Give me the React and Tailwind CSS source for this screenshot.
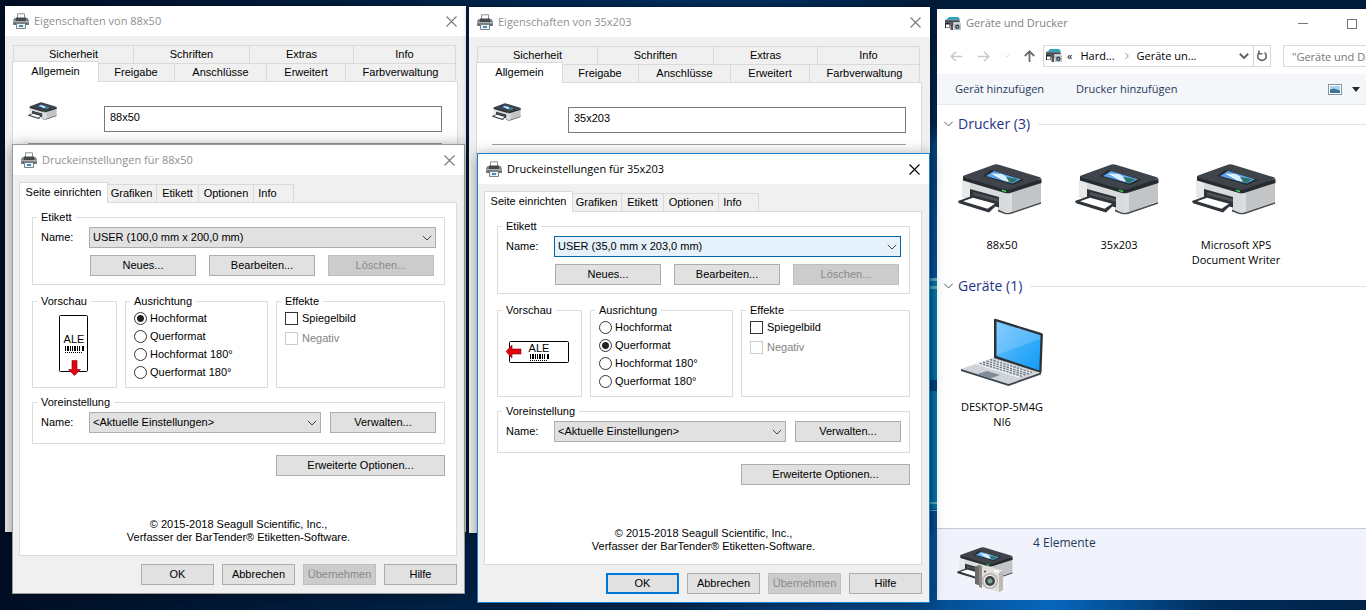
import { useState } from 'react';

const propertyTabsBack = [
  { label: 'Sicherheit', width: 'w-[120px]' },
  { label: 'Schriften', width: 'w-[116px]' },
  { label: 'Extras', width: 'w-[104px]' },
  { label: 'Info', width: 'flex-1' },
];

const propertyTabsFront = [
  { label: 'Freigabe', width: 'w-[77px]' },
  { label: 'Anschlüsse', width: 'w-[92px]' },
  { label: 'Erweitert', width: 'w-[79px]' },
  { label: 'Farbverwaltung', width: 'flex-1' },
];

const settingsTabs = [
  { label: 'Grafiken', width: 'w-[50px]' },
  { label: 'Etikett', width: 'w-[42px]' },
  { label: 'Optionen', width: 'w-[55px]' },
  { label: 'Info', width: 'w-[40px] pr-3' },
];

const orientations = ['Hochformat', 'Querformat', 'Hochformat 180°', 'Querformat 180°'];

const printers = ['88x50', '35x203', 'Microsoft XPS Document Writer'];

/* ---------- Icons ---------- */

const TitlePrinterIcon = () => (
  <svg className="size-4 shrink-0" viewBox="0 0 16 16" aria-hidden="true">
    <path d="M4.500 6V.8h7V6" fill="#fff" stroke="#8d9296" />
    <path d="M1.500 5h13l1.500 2.500V12H0V7.500z" fill="#7d8286" />
    <path d="M3 4.500h10V8H3z" fill="#44494d" />
    <path d="M0 8h16v1H0z" fill="#a9aeb1" />
    <path d="M1.500 10h13v1.500h-13z" fill="#55595d" />
    <path d="M3.500 10.500h9v5h-9z" fill="#eef3f6" stroke="#7b8185" />
    <path d="M6 12h4v2H6z" fill="#3d8fb8" />
    <path d="M13.500 9h1v1h-1z" fill="#7be07b" />
  </svg>
);

const DevicesIcon = () => (
  <svg className="size-4 shrink-0" viewBox="0 0 16 16" aria-hidden="true">
    <path d="M0 4 4 2h10l1 3v5H4L0 9z" fill="#87939b" />
    <path d="M4 1h9l2 2.500H2z" fill="#27a5bf" />
    <path d="M0 4.500h14V6H0z" fill="#3c484f" />
    <path d="M0 6.500h5V12H0z" fill="#252c31" />
    <path d="M1 8.500h3.500v3H1z" fill="#fff" />
    <path d="M5.500 6H8v8H5.500z" fill="#5b4f50" />
    <path d="M8.500 6.500H16V14H8.500z" fill="#b9c2c8" />
    <path d="M8.500 6.500H16v1H8.500z" fill="#e4eaed" />
    <circle cx="12.300" cy="10.800" r="2.200" fill="#39424a" />
    <circle cx="12.300" cy="10.800" r=".9" fill="#a6c7d8" />
  </svg>
);

const PrinterShape = () => (
  <>
    <path d="M4 15 49 27v21.500L40 46V34L12 26v9l-8-2z" fill="#d9dadb" />
    <path d="M4 15 12 17.500V34l-8-2z" fill="#e8e9e9" />
    <path d="M49 27 83 17v20.500L52 48.500h-3z" fill="#c3c4c6" />
    <path d="M49 27l5-1.500v22.300l-2 .7h-3z" fill="#dcddde" />
    <path d="M40 45.500 47 48.500q3 1 6-.2L83 38v1.800L53 50q-4 .8-7-.2l-6-2.300z" fill="#4a4f53" />
    <path d="M12 25 41 33v10.500L12 35z" fill="#2d3237" />
    <path d="M15 28 41 35v3L15 31z" fill="#4b5157" />
    <path d="M0 37 14 32l27 7-10 9.500L1 39.300z" fill="#2f353a" />
    <path d="M5 37.200 15 33.800l22 6-7.500 5z" fill="#fff" />
    <path d="M5 12 5 16.500 47 29q3 .8 6-.3L83.500 19v-4L50 22z" fill="#262b2f" />
    <path d="M35 1q3-1.200 6-.2L82 13.300q2 1 0 2L53 25q-4 1.200-7 .3L6 13.500q-2-1 0-2z" fill="#3e444a" />
    <path d="M33 6 66 15.800 55 21 25 12z" fill="#23282c" />
    <path d="M36 7 63 15.300 54.500 19.500 28 12z" fill="#5aa6ef" />
    <path d="M33 9.500 38 10 50 15l-4 1.800z" fill="#fff" />
    <path d="M36 9.800 44 10l9 5.500-4 2.200z" fill="#d8ecff" />
    <path d="M48 13 60 15l-5.500 4-3-1z" fill="#2e7361" />
    <path d="M44 25.500l4 1.200v1.600l-4-1.200z" fill="#3ddc55" />
  </>
);

const PrinterIcon = ({ className }) => (
  <svg className={className} viewBox="0 0 84 51" aria-hidden="true">
    <PrinterShape />
  </svg>
);

const LaptopIcon = () => (
  <svg className="h-[69px] w-[84px]" viewBox="0 0 84 69" aria-hidden="true">
    <defs>
      <linearGradient id="laptop-screen" x1="0" y1="0" x2="1" y2="1">
        <stop offset="0" stopColor="#6cc3ff" />
        <stop offset="1" stopColor="#109bf7" />
      </linearGradient>
    </defs>
    <path d="M1 51 34 39.500 81 54.500 48.500 66z" fill="#cfd4da" />
    <path d="M1 51 48.500 66 81 54.500v2L48.500 68 1 53z" fill="#3d464e" />
    <path d="M30 40.500 73 54 58 59.500 15 46z" fill="#eef1f4" />
    <path
      d="M30 41.500 72 54.500M26.500 42.800 69 56M23 44 65.500 57M19.500 45.200 62 58.300"
      stroke="#737d86"
      strokeWidth="1.400"
      strokeDasharray="2.500 1"
    />
    <path d="M27 53 40 57 30 60.500 17.500 56z" fill="#7e8b98" />
    <path d="M34 2q0-1.500 1.500-1.200L81.500 15q1.500.5 1.400 2L81.500 55 34 40z" fill="#2b3238" />
    <path d="M36.500 3.500 80.500 17.300 79.300 52.500 36.500 38z" fill="url(#laptop-screen)" />
    <path d="M36.500 3.500 80.500 17.300 80.300 21 36.500 37z" fill="#fff" opacity=".16" />
  </svg>
);

const PrinterCameraIcon = () => (
  <svg className="h-[46px] w-14" viewBox="0 0 56 46" aria-hidden="true">
    <g transform="scale(.667)">
      <PrinterShape />
    </g>
    <path d="M18 20 23 17.500v21L18 37z" fill="#6c6a69" />
    <path d="M22 18 25 19v22l-3-1z" fill="#8f8c8a" />
    <path d="M25 21 30 19l16 4.500V43l-4 2-17-5z" fill="#e3e0dc" />
    <path d="M42 26 46 23.500V43l-4 2z" fill="#bdb9b4" />
    <circle cx="33" cy="34" r="8" fill="#b5b3b0" />
    <circle cx="33" cy="34" r="6.500" fill="#eceae7" />
    <circle cx="33" cy="34" r="5" fill="#3c4145" />
    <circle cx="33" cy="34" r="2.500" fill="#7aa08f" />
    <path d="M37 22.500 42 24v2l-5-1.500z" fill="#fff" />
    <circle cx="28" cy="24.500" r="1" fill="#444" />
  </svg>
);

const CloseIcon = ({ color }) => (
  <svg className="size-[11px]" viewBox="0 0 11 11" fill="none" stroke={color} strokeWidth="1.100" aria-hidden="true">
    <path d="M.5.5l10 10M10.500.5l-10 10" />
  </svg>
);

const Chevron = ({ className }) => (
  <svg className={className} viewBox="0 0 10 6" fill="none" stroke="currentColor" aria-hidden="true">
    <path d="M.8.800 5 5 9.200.800" />
  </svg>
);

const Barcode = ({ x, y }) => (
  <g fill="#000">
    {[0, 2, 5, 7, 9, 12, 14, 17].map((bar, i) => (
      <rect key={bar} x={x + bar} y={y} width={i % 3 === 1 ? 2 : 1} height="5" />
    ))}
    <path d={`M${x} ${y + 6.5}h18`} stroke="#000" strokeDasharray="1 1" />
  </g>
);

const LabelPreview = ({ landscape }) =>
  landscape ? (
    <svg className="mt-6 ml-2 h-6 w-16" viewBox="0 0 64 24" aria-hidden="true">
      <rect x="3.500" y="1.500" width="59" height="21" rx="1" fill="#fff" stroke="#000" />
      <text x="33" y="12" textAnchor="middle" fontSize="11">ALE</text>
      <Barcode x={24} y={14} />
      <path d="M0 11.500 6 5v4h9v5H6v4z" fill="#e3000f" stroke="#8a0008" strokeWidth=".6" />
    </svg>
  ) : (
    <svg className="mt-2 ml-[26px] h-[62px] w-[30px]" viewBox="0 0 30 62" aria-hidden="true">
      <rect x=".5" y=".5" width="28" height="56" rx="1" fill="#fff" stroke="#000" />
      <text x="15" y="28" textAnchor="middle" fontSize="11">ALE</text>
      <Barcode x={6} y={31} />
      <path d="M15.500 60.500 9.500 54.500h3.500v-9h5v9h3.500z" fill="#e3000f" stroke="#8a0008" strokeWidth=".6" />
    </svg>
  );

const Wallpaper = () => (
  <svg className="absolute inset-0 size-full" viewBox="0 0 1366 610" preserveAspectRatio="none" aria-hidden="true">
    <defs>
      <linearGradient id="wall-sky" x1="0" y1="0" x2="0" y2="1">
        <stop offset="0" stopColor="#011a38" />
        <stop offset=".2" stopColor="#012347" />
        <stop offset=".24" stopColor="#024279" />
        <stop offset=".45" stopColor="#07549f" />
        <stop offset="1" stopColor="#044c90" />
      </linearGradient>
      <linearGradient id="wall-left" x1="0" y1="0" x2="1" y2="0">
        <stop offset="0" stopColor="#010f26" />
        <stop offset=".34" stopColor="#012349" />
        <stop offset=".5" stopColor="#012c59" />
        <stop offset=".68" stopColor="#034a8b" stopOpacity="0" />
      </linearGradient>
      <linearGradient id="wall-floor" x1="0" y1="0" x2="1" y2="0">
        <stop offset="0" stopColor="#054c90" />
        <stop offset=".28" stopColor="#0767bd" />
        <stop offset=".65" stopColor="#012d5a" />
        <stop offset="1" stopColor="#012347" />
      </linearGradient>
    </defs>
    <path d="M0 0h1366v610H0z" fill="url(#wall-sky)" />
    <path d="M0 0h1366v610H0z" fill="url(#wall-left)" />
    <path d="M910 278h456v102H910zM910 391h456v118H910z" fill="#0379ad" />
    <path d="M910 380h456v11H910z" fill="#034383" />
    <path d="M910 278h456v3H910zM910 286h456v3H910zM910 502h456v2H910zM910 510h456v1H910z" fill="#5fb4c8" />
    <path d="M930 598h436v12H930z" fill="url(#wall-floor)" />
  </svg>
);

/* ---------- Shared controls ---------- */

const TitleBar = ({ title, active }) => (
  <header className="flex h-[30px] shrink-0 items-center gap-[5px] bg-white pr-[9px] pl-2 font-['Open_Sans',sans-serif]">
    <TitlePrinterIcon />
    <h2 className={active ? 'flex-1 text-[11px] text-black' : 'flex-1 text-[11px] text-[#8f8f8f]'}>{title}</h2>
    <button type="button" aria-label="Schließen">
      <CloseIcon color={active ? '#000' : '#7a7a7a'} />
    </button>
  </header>
);

const Tab = ({ label, width, selected }) => (
  <button
    type="button"
    role="tab"
    aria-selected={!!selected}
    className={
      selected
        ? `relative -mr-px -mb-px h-[21px] border border-b-0 border-[#d9d9d9] bg-white pb-0.5 ${width}`
        : `h-[18px] border border-b-0 border-l-0 border-[#d9d9d9] bg-[#f0f0f0] ${width}`
    }
  >
    {label}
  </button>
);

const PushButton = ({ children, width, primary, disabled }) => {
  let tone = 'border border-[#adadad] bg-[#e1e1e1] text-black';
  if (primary) tone = 'border-2 border-[#0078d7] bg-[#e1e1e1] text-black';
  if (disabled) tone = 'border border-[#bfbfbf] bg-[#cccccc] text-[#8a8a8a]';

  return (
    <button type="button" disabled={disabled} className={`h-[21px] shrink-0 ${tone} ${width}`}>
      {children}
    </button>
  );
};

const Group = ({ title, className, children }) => (
  <fieldset className={`min-w-0 border border-[#dcdcdc] px-2 ${className}`}>
    <legend className="-ml-1 px-1 leading-3">{title}</legend>
    {children}
  </fieldset>
);

const ComboBox = ({ id, value, focused }) => (
  <div className="relative min-w-0 flex-1">
    <select
      id={id}
      defaultValue={value}
      className={
        focused
          ? 'block h-[21px] w-full appearance-none border border-[#0067a8] bg-[#e5f1fb] pr-6 pl-[3px]'
          : 'block h-[21px] w-full appearance-none border border-[#adadad] bg-[#e1e1e1] pr-6 pl-[3px]'
      }
    >
      <option>{value}</option>
    </select>
    <Chevron className="pointer-events-none absolute top-2 right-1 h-[6px] w-[10px] text-[#444]" />
  </div>
);

/* ---------- Windows ---------- */

const PropertiesWindow = ({ name, place }) => (
  <section
    className={`absolute h-[526px] w-[461px] bg-[#f0f0f0] font-['Liberation_Sans',sans-serif] text-[11px] text-black shadow-[0_0_6px_rgba(0,0,0,0.5)] ${place}`}
  >
    <TitleBar title={`Eigenschaften von ${name}`} />
    <div className="flex h-[calc(100%-30px)] flex-col pt-[9px] pr-2 pl-[7px]">
      <div role="tablist" className="mr-0.5 ml-px flex h-[18px] items-end border-l border-[#d9d9d9]">
        {propertyTabsBack.map((tab) => (
          <Tab key={tab.label} {...tab} />
        ))}
      </div>
      <div role="tablist" className="mr-0.5 flex h-[18px] items-end">
        <Tab label="Allgemein" width="w-[87px]" selected />
        {propertyTabsFront.map((tab) => (
          <Tab key={tab.label} {...tab} />
        ))}
      </div>
      <div className="flex-1 border border-[#dcdcdc] bg-white px-[15px] pt-6">
        <div className="flex h-[38px] items-start justify-between border-b border-[#a0a0a0]">
          <PrinterIcon className="-mt-1 h-[18px] w-[29px]" />
          <input
            type="text"
            aria-label="Druckername"
            defaultValue={name}
            className="h-[26px] w-[338px] border border-[#7a7a7a] bg-white pb-1 pl-[5px]"
          />
        </div>
      </div>
    </div>
  </section>
);

const SettingsDialog = ({ name, format, initialOrientation, active, place }) => {
  const [orientation, setOrientation] = useState(initialOrientation);

  return (
    <section
      className={`absolute w-[453px] border bg-[#f0f0f0] font-['Liberation_Sans',sans-serif] text-[11px] text-black shadow-[0_2px_14px_rgba(0,0,0,0.4)] ${
        active ? 'border-[#1883d7]' : 'border-[#9a9a9a]'
      } ${place}`}
    >
      <TitleBar title={`Druckeinstellungen für ${name}`} active={active} />
      <div className="px-[6px] pt-[7px] pb-2">
        <div role="tablist" className="flex h-5 items-end">
          <Tab label="Seite einrichten" width="w-[89px]" selected />
          {settingsTabs.map((tab) => (
            <Tab key={tab.label} {...tab} />
          ))}
        </div>

        <div className="mr-px border border-[#dcdcdc] bg-white pt-2 pr-[11px] pb-[11px] pl-3">
          <Group title="Etikett" className="pb-2">
            <div className="mt-1 flex">
              <label htmlFor={`format-${name}`} className="w-12 leading-5">Name:</label>
              <ComboBox id={`format-${name}`} value={format} focused={active} />
            </div>
            <div className="mt-[7px] ml-[49px] flex gap-[13px]">
              <PushButton width="w-[106px]">Neues...</PushButton>
              <PushButton width="w-[106px]">Bearbeiten...</PushButton>
              <PushButton width="w-[106px]" disabled>Löschen...</PushButton>
            </div>
          </Group>

          <div className="mt-[10px] flex gap-2">
            <Group title="Vorschau" className="w-[85px]">
              <div className="-mx-2">
                <LabelPreview landscape={orientation.startsWith('Quer')} />
              </div>
            </Group>
            <Group title="Ausrichtung" className="w-[143px] pb-1.5">
              <div className="mt-0.5">
                {orientations.map((option) => (
                  <label key={option} className="flex h-[18px] items-center gap-[3px]">
                    <input
                      type="radio"
                      name={`orientation-${name}`}
                      checked={orientation === option}
                      onChange={() => setOrientation(option)}
                      className="size-[13px] appearance-none rounded-full border border-[#333] bg-white checked:bg-[radial-gradient(circle,#222_0_3px,#fff_4px)]"
                    />
                    {option}
                  </label>
                ))}
              </div>
            </Group>
            <Group title="Effekte" className="flex-1">
              <div className="mt-[5px] space-y-[7px]">
                <label className="flex items-center gap-1 leading-[13px]">
                  <input type="checkbox" className="size-[13px] appearance-none border border-[#333] bg-white" />
                  Spiegelbild
                </label>
                <label className="flex items-center gap-1 leading-[13px] text-[#838383]">
                  <input type="checkbox" disabled className="size-[13px] appearance-none border border-[#cccccc] bg-white" />
                  Negativ
                </label>
              </div>
            </Group>
          </div>

          <Group title="Voreinstellung" className="mt-2 pb-[10px]">
            <div className="mt-1 flex items-start">
              <label htmlFor={`preset-${name}`} className="w-12 leading-5">Name:</label>
              <div className="flex flex-1 gap-[9px]">
                <ComboBox id={`preset-${name}`} value="<Aktuelle Einstellungen>" />
                <PushButton width="w-[106px]">Verwalten...</PushButton>
              </div>
            </div>
          </Group>

          <div className="mt-[11px] flex justify-end">
            <PushButton width="w-[169px]">Erweiterte Optionen...</PushButton>
          </div>

          <p className="mt-[42px] text-center leading-[13px]">
            © 2015-2018 Seagull Scientific, Inc.,
            <br />
            Verfasser der BarTender® Etiketten-Software.
          </p>
        </div>

        <div className="mt-2 mr-px flex justify-end gap-2">
          <PushButton width="w-[73px]" primary={active}>OK</PushButton>
          <PushButton width="w-[73px]">Abbrechen</PushButton>
          <PushButton width="w-[73px]" disabled>Übernehmen</PushButton>
          <PushButton width="w-[73px]">Hilfe</PushButton>
        </div>
      </div>
    </section>
  );
};

const SectionHeader = ({ title }) => (
  <div className="flex items-center gap-1 text-[#1e3287]">
    <Chevron className="h-[6px] w-[11px] text-[#5a5a5a]" />
    <h3 className="text-sm leading-5">{title}</h3>
    <div className="ml-1 h-px flex-1 bg-[#e2e2e2]" />
  </div>
);

const ExplorerWindow = () => (
  <section className="absolute top-[9px] right-0 left-[937px] flex h-[591px] flex-col overflow-hidden bg-white font-['Open_Sans',sans-serif] text-[11px] text-black">
    <header className="flex h-[29px] shrink-0 items-center gap-[5px] pr-[9px] pl-2 text-[#7f7f7f]">
      <DevicesIcon />
      <h2 className="flex-1">Geräte und Drucker</h2>
      <button type="button" aria-label="Minimieren" className="mr-[34px] h-px w-[10px] bg-[#777]" />
      <button type="button" aria-label="Maximieren" className="size-[10px] border border-[#777]" />
    </header>

    {/* Address bar */}
    <div className="flex h-9 shrink-0 items-center">
      <div className="flex w-[106px] items-center justify-between pr-2 pl-[13px] text-[#c9c9c9]">
        <svg className="h-[11px] w-[13px]" viewBox="0 0 13 11" fill="none" stroke="currentColor" strokeWidth="1.500">
          <path d="M6 .8 1.200 5.500 6 10.200M1.200 5.500h11" />
        </svg>
        <svg className="h-[11px] w-[13px]" viewBox="0 0 13 11" fill="none" stroke="currentColor" strokeWidth="1.500">
          <path d="M7 .8l4.800 4.700L7 10.200M11.800 5.500h-11" />
        </svg>
        <Chevron className="h-1 w-[6px]" />
        <svg className="h-3 w-[11px]" viewBox="0 0 11 12" fill="none" stroke="#6d6d6d" strokeWidth="1.800">
          <path d="M.8 6 5.500 1.300 10.200 6M5.500 1.300V12" />
        </svg>
      </div>
      <div className="flex h-[22px] w-[228px] items-center border border-[#d9d9d9] pl-[2px]">
        <DevicesIcon />
        <span className="ml-[5px]">«</span>
        <span className="ml-2">Hard...</span>
        <Chevron className="mr-1.5 ml-2 h-1 w-2 -rotate-90 text-[#555]" />
        <span className="flex-1 whitespace-nowrap">Geräte un...</span>
        <Chevron className="mr-1 h-[6px] w-[10px] stroke-2 text-[#666]" />
        <button type="button" aria-label="Aktualisieren" className="flex h-full w-[17px] items-center justify-center border-l border-[#d9d9d9]">
          <svg className="size-3" viewBox="0 0 12 12" fill="none" stroke="#666" strokeWidth="1.600">
            <path d="M8.500 2.600A4.300 4.300 0 1 1 3.500 2.600" />
            <path d="M3 .5v3.300h3.500" />
          </svg>
        </button>
      </div>
      <input
        type="text"
        aria-label="Suchen"
        defaultValue={'"Geräte und Drucker" durchsuchen'}
        className="ml-3 h-[22px] min-w-0 flex-1 border border-r-0 border-[#d9d9d9] pl-2 text-[#767676]"
      />
    </div>

    {/* Command bar */}
    <nav className="flex h-[31px] shrink-0 items-center gap-8 border-b border-[#e4e8ee] bg-[#f4f6f9] pr-[6px] pl-[18px] text-[#1e395b]">
      <button type="button">Gerät hinzufügen</button>
      <button type="button">Drucker hinzufügen</button>
      <button type="button" aria-label="Ansicht" className="ml-auto flex items-center gap-[10px]">
        <svg className="h-[11px] w-[14px]" viewBox="0 0 14 11">
          <rect x=".5" y=".5" width="13" height="10" fill="#fff" stroke="#8494a4" />
          <path d="M2 2h10v7H2z" fill="#a9d2ee" />
          <path d="M2 5.500l4-1 6 2V9H2z" fill="#3c7296" />
        </svg>
        <svg className="h-[5px] w-2" viewBox="0 0 8 5">
          <path d="M0 0h8L4 5z" fill="#1e2b3c" />
        </svg>
      </button>
    </nav>

    <div className="flex-1 pt-[9px] pl-[6px]">
      <SectionHeader title="Drucker (3)" />
      <ul className="mt-[30px] flex">
        {printers.map((printer) => (
          <li key={printer} className="flex w-[117px] flex-col items-center pl-px text-center">
            <PrinterIcon className="mr-1 h-[51px] w-[84px]" />
            <span className="mt-[22px] w-[100px] leading-[15px]">{printer}</span>
          </li>
        ))}
      </ul>
      <div className="mt-[9px]">
        <SectionHeader title="Geräte (1)" />
      </div>
      <ul className="mt-[22px] flex">
        <li className="flex w-[117px] flex-col items-center pl-px text-center">
          <LaptopIcon />
          <span className="mt-3 w-[88px] leading-[15px] break-all">DESKTOP-5M4GNI6</span>
        </li>
      </ul>
    </div>

    <footer className="flex h-[72px] shrink-0 items-start border-t border-[#bfcbdb] bg-[#f0f3fb] pl-5 text-[#1e395b]">
      <div className="pt-[18px]">
        <PrinterCameraIcon />
      </div>
      <span className="mt-1.5 ml-5 text-xs">4 Elemente</span>
    </footer>
  </section>
);

const App = () => (
  <main className="relative min-h-screen overflow-hidden bg-[#011a38]">
    <Wallpaper />
    <PropertiesWindow name="88x50" place="top-[6px] left-[5px]" />
    <SettingsDialog
      name="88x50"
      format="USER (100,0 mm x 200,0 mm)"
      initialOrientation="Hochformat"
      place="top-[144px] left-3"
    />
    <PropertiesWindow name="35x203" place="top-[7px] left-[469px]" />
    <ExplorerWindow />
    <SettingsDialog
      name="35x203"
      format="USER (35,0 mm x 203,0 mm)"
      initialOrientation="Querformat"
      active
      place="top-[153px] left-[477px]"
    />
  </main>
);

export default App;
